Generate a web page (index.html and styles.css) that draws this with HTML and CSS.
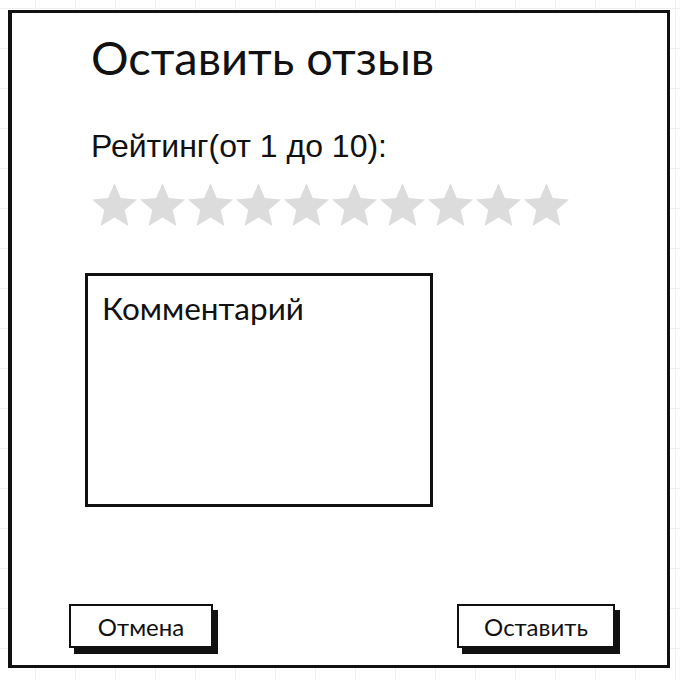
FILE: index.html
```html
<!DOCTYPE html>
<html lang="ru">
<head>
    <meta charset="UTF-8">
    <meta name="viewport" content="width=device-width, initial-scale=1.0">
    <title>Оставить отзыв</title>
    <link rel="stylesheet" href="styles.css">
</head>
<body>
    <div class="frame">
        <div class="content">
            <h1 class="title">Оставить отзыв</h1>
            <div class="rating-label">Рейтинг(от 1 до 10):</div>
            <div class="stars">
                <svg class="star" viewBox="2 2 20 19"><path d="M12 17.27L18.18 21l-1.64-7.03L22 9.24l-7.19-.61L12 2 9.19 8.63 2 9.24l5.46 4.73L5.82 21z"/></svg>
                <svg class="star" viewBox="2 2 20 19"><path d="M12 17.27L18.18 21l-1.64-7.03L22 9.24l-7.19-.61L12 2 9.19 8.63 2 9.24l5.46 4.73L5.82 21z"/></svg>
                <svg class="star" viewBox="2 2 20 19"><path d="M12 17.27L18.18 21l-1.64-7.03L22 9.24l-7.19-.61L12 2 9.19 8.63 2 9.24l5.46 4.73L5.82 21z"/></svg>
                <svg class="star" viewBox="2 2 20 19"><path d="M12 17.27L18.18 21l-1.64-7.03L22 9.24l-7.19-.61L12 2 9.19 8.63 2 9.24l5.46 4.73L5.82 21z"/></svg>
                <svg class="star" viewBox="2 2 20 19"><path d="M12 17.27L18.18 21l-1.64-7.03L22 9.24l-7.19-.61L12 2 9.19 8.63 2 9.24l5.46 4.73L5.82 21z"/></svg>
                <svg class="star" viewBox="2 2 20 19"><path d="M12 17.27L18.18 21l-1.64-7.03L22 9.24l-7.19-.61L12 2 9.19 8.63 2 9.24l5.46 4.73L5.82 21z"/></svg>
                <svg class="star" viewBox="2 2 20 19"><path d="M12 17.27L18.18 21l-1.64-7.03L22 9.24l-7.19-.61L12 2 9.19 8.63 2 9.24l5.46 4.73L5.82 21z"/></svg>
                <svg class="star" viewBox="2 2 20 19"><path d="M12 17.27L18.18 21l-1.64-7.03L22 9.24l-7.19-.61L12 2 9.19 8.63 2 9.24l5.46 4.73L5.82 21z"/></svg>
                <svg class="star" viewBox="2 2 20 19"><path d="M12 17.27L18.18 21l-1.64-7.03L22 9.24l-7.19-.61L12 2 9.19 8.63 2 9.24l5.46 4.73L5.82 21z"/></svg>
                <svg class="star" viewBox="2 2 20 19"><path d="M12 17.27L18.18 21l-1.64-7.03L22 9.24l-7.19-.61L12 2 9.19 8.63 2 9.24l5.46 4.73L5.82 21z"/></svg>
            </div>
            <div class="comment-box">Комментарий</div>
        </div>
        <div class="actions">
            <button class="sketch-button" type="button">Отмена</button>
            <button class="sketch-button" type="button">Оставить</button>
        </div>
    </div>
</body>
</html>
```

FILE: styles.css
```css
body {
    margin: 0;
    padding: 0;
    width: 680px;
    height: 680px;
    font-family: "Lato", "Noto Sans", sans-serif;
    color: #111;
    background-color: #fff;
    background-image:
        linear-gradient(#f0f0f0 1px, transparent 1px),
        linear-gradient(90deg, #f0f0f0 1px, transparent 1px);
    background-size: 40px 40px;
    background-position: 35px 8px;
    overflow: hidden;
}

.frame {
    box-sizing: border-box;
    width: 662px;
    height: 658px;
    margin: 10px 0 0 8px;
    border: 3px solid #111;
    border-left-width: 4px;
    background-color: #fff;
    display: flex;
    flex-direction: column;
    justify-content: space-between;
}

.content {
    padding: 0 0 0 73px;
}

.title {
    margin: 14px 0 0 6px;
    font-size: 47px;
    font-weight: 400;
    line-height: 60px;
}

.rating-label {
    margin: 41px 0 0 6px;
    font-family: "Liberation Sans", Arial, sans-serif;
    font-size: 32px;
    line-height: 36px;
}

.stars {
    display: flex;
    gap: 3px;
    margin: 19px 0 0 7px;
}

.star {
    width: 45px;
    height: 43px;
    fill: #dcdcdc;
}

.comment-box {
    box-sizing: border-box;
    width: 348px;
    height: 234px;
    margin-top: 47px;
    padding: 14px 14px;
    border: 3px solid #111;
    font-size: 31.5px;
    line-height: 36px;
}

.actions {
    display: flex;
    justify-content: space-between;
    padding: 0 52px 17px 57px;
}

.sketch-button {
    box-sizing: border-box;
    height: 44px;
    padding: 0;
    border: 2px solid #111;
    background-color: #fff;
    box-shadow: 5px 6px 0 #111;
    font-family: "Lato", "Noto Sans", sans-serif;
    font-size: 24px;
    color: #111;
}

.sketch-button:first-child {
    width: 144px;
}

.sketch-button:last-child {
    width: 158px;
}
```
